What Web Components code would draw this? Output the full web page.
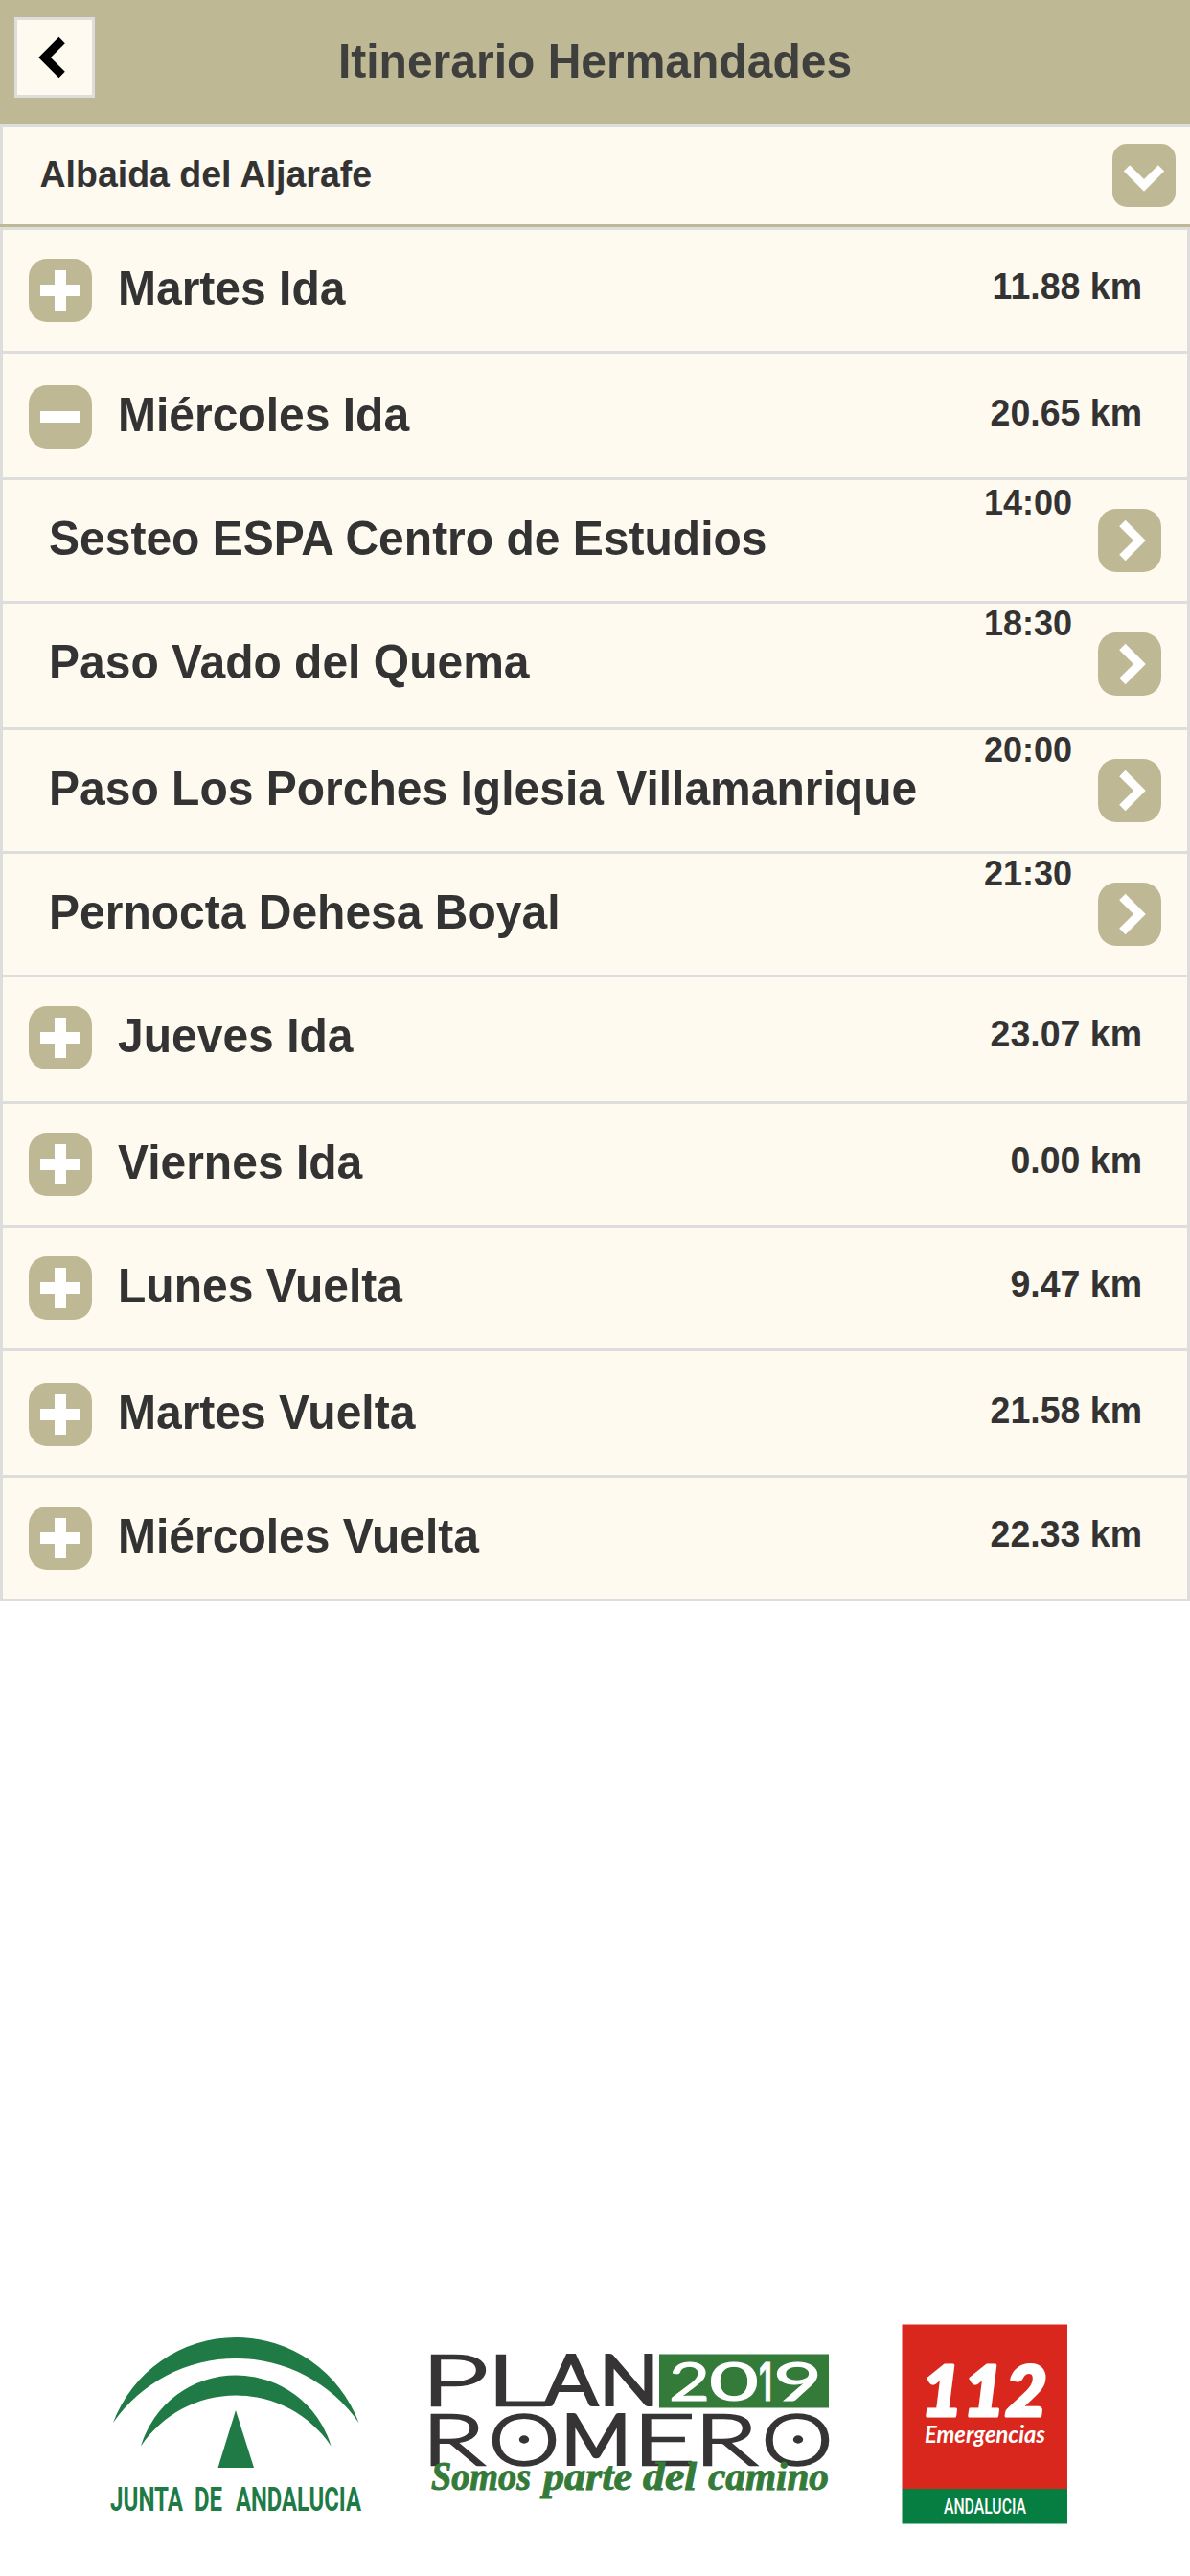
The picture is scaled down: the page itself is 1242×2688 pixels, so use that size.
<!DOCTYPE html>
<html lang="es">
<head>
<meta charset="utf-8">
<title>Itinerario Hermandades</title>
<style>
html,body{margin:0;padding:0;background:#fff}
body{font-family:"Liberation Sans",Arial,sans-serif;font-weight:bold;color:#333;width:1242px;height:2688px;overflow:hidden}
</style>
</head>
<body>
<itinerary-page></itinerary-page>
<script>
const define = (name, html, after) => customElements.define(name, class extends HTMLElement {
  constructor() {
    super();
    const t = document.createElement('template');
    t.innerHTML = html;
    this.attachShadow({ mode: 'open' }).appendChild(t.content.cloneNode(true));
  }
  connectedCallback() { if (after) after(this); }
});

const SHAPES = {
  plus: '14,5 9,5 9,0 5,0 5,5 0,5 0,9 5,9 5,14 9,14 9,9 14,9',
  minus: '0,5 14,5 14,9 0,9',
  left: '10.596,11.949 5.646,7 10.596,2.05 8.475,-0.071 1.404,7 8.475,14.07',
  right: '3.404,2.051 8.354,7 3.404,11.95 5.525,14.07 12.596,7 5.525,-0.071',
  down: '11.949,3.404 7,8.354 2.05,3.404 -0.071,5.525 7,12.596 14.07,5.525'
};

define('app-icon', `<style>
:host{display:flex;flex:none;align-items:center;justify-content:center;box-sizing:border-box;width:66px;height:66px;border-radius:19px;background:#bfb895;color:#fff}
:host([boxed]){width:84px;height:84px;border-radius:0;background:#fffaf0;border:3px solid #ddd;color:#000}
:host([shape=down]){border-radius:15px}
svg{display:block;width:42px;height:42px;overflow:visible}
</style><svg viewBox="0 0 14 14" fill="currentColor"><polygon/></svg>`,
  el => el.shadowRoot.querySelector('polygon').setAttribute('points', SHAPES[el.getAttribute('shape')]));

define('app-header', `<style>
:host{display:grid;grid-template-columns:84px 1fr 84px;box-sizing:border-box;height:129px;padding:18px 15px 0;background:#bfb895}
h1{margin:0;padding-top:20px;font-size:48px;line-height:53px;text-align:center;color:#3f3f3d;transform:scaleY(1.05);transform-origin:0 63px}
</style><app-icon shape="left" boxed></app-icon><h1><slot></slot></h1>`);

define('town-select', `<style>
:host{display:flex;justify-content:space-between;box-sizing:border-box;height:108px;background:#fffaf0;border-top:3px solid #ddd;border-bottom:3px solid #bfb895;box-shadow:inset 3px 0 #ddd;padding:0 15px 0 41.5px}
span{padding-top:29px;font-size:37.5px;line-height:42px;transform:scaleY(1.05);transform-origin:0 63px}
app-icon{margin-top:18px}
</style><span><slot></slot></span><app-icon shape="down"></app-icon>`);

const rowStyle = `
:host{display:flex;align-items:flex-start;box-sizing:border-box;height:129px;background:#fffaf0;border:3px solid #ddd;border-bottom:0}
:host([tall]){height:132px}
.title{flex:1;white-space:nowrap;font-size:48px;line-height:53px;padding-top:35px;transform:scaleY(1.05);transform-origin:0 78px}
app-icon{margin-top:30px}`;

define('day-row', `<style>${rowStyle}
:host{padding:0 47px 0 27px}
:host([shift]){padding-top:3px}
.title{margin-left:27px}
.km{font-size:37.5px;line-height:42px;padding-top:38px;white-space:nowrap;transform:scaleY(1.05);transform-origin:0 72px}
</style><app-icon shape="plus"></app-icon><span class="title"><slot></slot></span><span class="km"><slot name="km"></slot></span>`,
  el => el.hasAttribute('open') && el.shadowRoot.querySelector('app-icon').shadowRoot.querySelector('polygon').setAttribute('points', SHAPES.minus));

define('stop-row', `<style>${rowStyle}
:host{padding:0 27px 0 48px}
.time{font-size:36px;line-height:41px;margin-right:27px;transform:scaleY(1.05);transform-origin:0 33px}
:host([first]) .time{margin-top:3px}
</style><span class="title"><slot></slot></span><span class="time"><slot name="time"></slot></span><app-icon shape="right"></app-icon>`);

const spread = (list, gap = '') => list.map(([c, x, w, extra = '']) => `<tspan x="${x}" textLength="${w}" lengthAdjust="spacingAndGlyphs" ${extra}>${c}</tspan>`).join(gap);
const thick = 'font-weight="400" stroke-width="1.800"';

define('junta-logo', `<style>:host{display:block}svg{display:block;overflow:visible}</style>
<svg width="310" height="250" viewBox="90 2400 310 250" fill="#207a45">
<path d="M118 2528A136.9 136.9 0 0 1 374.5 2528A156.2 156.2 0 0 0 118 2528Z"/>
<path d="M147 2552.500A103.600 103.600 0 0 1 345.600 2552.500A119.500 119.500 0 0 0 147 2552.500Z"/>
<path d="M246 2515L265 2575H227.500Z"/>
<text y="2620" font-family="Roboto,sans-serif" font-weight="700" font-size="35">${spread([['JUNTA',115,76],['DE',203,29],['ANDALUCIA',246,131]],' ')}</text>
</svg>`);

define('plan-logo', `<style>:host{display:block}svg{display:block;overflow:visible}</style>
<svg width="460" height="250" viewBox="430 2400 460 250" font-family="Lato,sans-serif">
<rect x="688" y="2456.500" width="177" height="56" fill="#347a39"/>
<g fill="#363435" font-size="73" font-weight="300" stroke="#363435" stroke-width="2.400">
<text y="2509.500">${spread([['P',439,71],['L',507,62],['A',567.5,57,thick],['N',625,63,thick]])}</text>
<text y="2571.500">${spread([['R',440,66],['O',509.7,74.5],['M',585.4,73.2,thick],['E',660,66],['R',724.500,66],['O',794.7,74.5]])}</text>
<ellipse cx="547" cy="2545.500" rx="4" ry="3"/><ellipse cx="833" cy="2545.500" rx="4" ry="3"/>
</g>
<text y="2505" font-size="56.500" font-weight="400" fill="#fff" stroke="#fff" stroke-width="1">${spread([['2',698,43],['0',740,52],['1',792,14,'font-family="Inter" font-weight="600" font-size="55"'],['9',807,51]])}</text>
<text y="2598" font-family="'Liberation Serif',serif" font-weight="700" font-style="italic" font-size="43" fill="#347a39" stroke="#347a39" stroke-width="1">${spread([['Somos',450,104],['parte',567,93],['del',671,56],['camino',739,126]],' ')}</text>
</svg>`);

define('emergency-logo', `<style>:host{display:block}svg{display:block;overflow:visible}</style>
<svg width="220" height="250" viewBox="920 2400 220 250" fill="#fff">
<rect x="941.500" y="2425.500" width="172.500" height="172" fill="#da271d"/>
<rect x="941.500" y="2597" width="172.500" height="36.500" fill="#077e41"/>
<text x="961" y="2520.500" font-family="Lato,sans-serif" font-weight="900" font-style="italic" font-size="72" stroke="#fff" stroke-width="3" stroke-linejoin="round" textLength="132" lengthAdjust="spacingAndGlyphs">112</text>
<text x="965" y="2549" font-family="Lato,sans-serif" font-weight="700" font-style="italic" font-size="25" textLength="126" lengthAdjust="spacingAndGlyphs">Emergencias</text>
<text x="985" y="2623" font-family="Roboto,sans-serif" font-weight="500" font-size="22.500" textLength="86" lengthAdjust="spacingAndGlyphs">ANDALUCIA</text>
</svg>`);

define('itinerary-page', `<style>
:host{display:flex;flex-direction:column;height:2688px}
main{border-bottom:3px solid #ddd}
footer{display:flex;gap:30px;margin-top:auto;padding:0 0 38px 90px}
</style>
<app-header>Itinerario Hermandades</app-header>
<town-select>Albaida del Aljarafe</town-select>
<main>
<day-row>Martes Ida<span slot="km">11.88 km</span></day-row>
<day-row open tall shift>Miércoles Ida<span slot="km">20.65 km</span></day-row>
<stop-row first>Sesteo ESPA Centro de Estudios<span slot="time">14:00</span></stop-row>
<stop-row tall>Paso Vado del Quema<span slot="time">18:30</span></stop-row>
<stop-row>Paso Los Porches Iglesia Villamanrique<span slot="time">20:00</span></stop-row>
<stop-row>Pernocta Dehesa Boyal<span slot="time">21:30</span></stop-row>
<day-row tall>Jueves Ida<span slot="km">23.07 km</span></day-row>
<day-row>Viernes Ida<span slot="km">0.00 km</span></day-row>
<day-row>Lunes Vuelta<span slot="km">9.47 km</span></day-row>
<day-row tall shift>Martes Vuelta<span slot="km">21.58 km</span></day-row>
<day-row>Miércoles Vuelta<span slot="km">22.33 km</span></day-row>
</main>
<footer><junta-logo></junta-logo><plan-logo></plan-logo><emergency-logo></emergency-logo></footer>`);
</script>
</body>
</html>
